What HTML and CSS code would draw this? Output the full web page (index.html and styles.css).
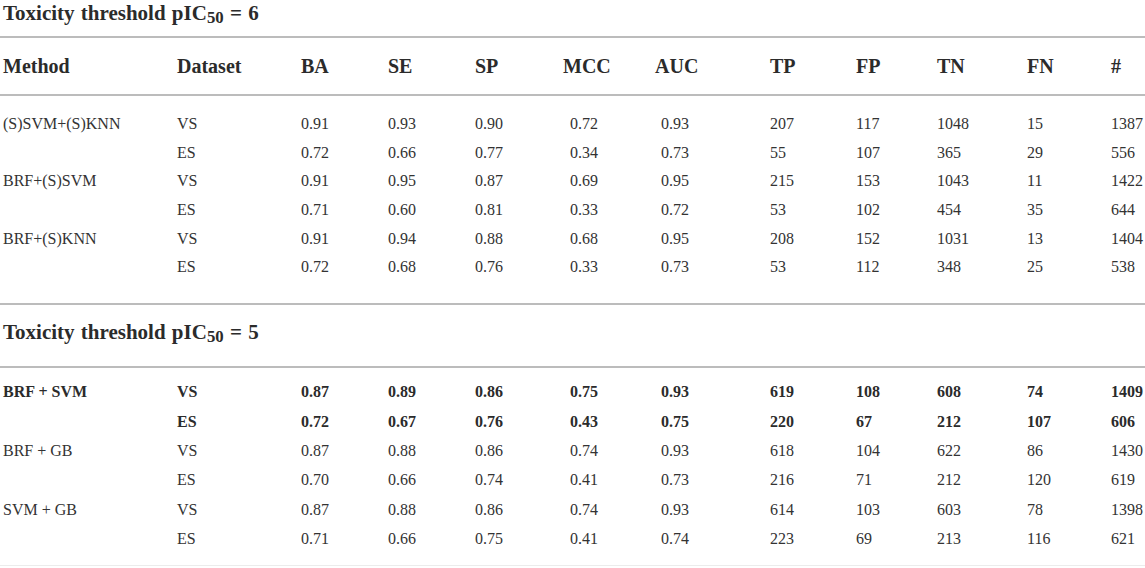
FILE: index.html
```html
<!DOCTYPE html>
<html lang="en">

<head>
    <meta charset="UTF-8">
    <meta name="viewport" content="width=device-width, initial-scale=1.0">
    <title>Toxicity threshold table</title>
    <link rel="stylesheet" href="styles.css">
</head>

<body>
    <div class="table-wrap">
        <h2 class="section-title first">Toxicity threshold pIC<sub>50</sub> = 6</h2>

        <div class="row head">
            <span>Method</span><span>Dataset</span><span>BA</span><span>SE</span><span>SP</span><span>MCC</span><span>AUC</span><span>TP</span><span>FP</span><span>TN</span><span>FN</span><span>#</span>
        </div>

        <div class="section-body">
            <div class="row">
                <span>(S)SVM+(S)KNN</span><span>VS</span><span>0.91</span><span>0.93</span><span>0.90</span><span>0.72</span><span>0.93</span><span>207</span><span>117</span><span>1048</span><span>15</span><span>1387</span>
            </div>
            <div class="row">
                <span></span><span>ES</span><span>0.72</span><span>0.66</span><span>0.77</span><span>0.34</span><span>0.73</span><span>55</span><span>107</span><span>365</span><span>29</span><span>556</span>
            </div>
            <div class="row">
                <span>BRF+(S)SVM</span><span>VS</span><span>0.91</span><span>0.95</span><span>0.87</span><span>0.69</span><span>0.95</span><span>215</span><span>153</span><span>1043</span><span>11</span><span>1422</span>
            </div>
            <div class="row">
                <span></span><span>ES</span><span>0.71</span><span>0.60</span><span>0.81</span><span>0.33</span><span>0.72</span><span>53</span><span>102</span><span>454</span><span>35</span><span>644</span>
            </div>
            <div class="row">
                <span>BRF+(S)KNN</span><span>VS</span><span>0.91</span><span>0.94</span><span>0.88</span><span>0.68</span><span>0.95</span><span>208</span><span>152</span><span>1031</span><span>13</span><span>1404</span>
            </div>
            <div class="row">
                <span></span><span>ES</span><span>0.72</span><span>0.68</span><span>0.76</span><span>0.33</span><span>0.73</span><span>53</span><span>112</span><span>348</span><span>25</span><span>538</span>
            </div>
        </div>

        <h2 class="section-title second">Toxicity threshold pIC<sub>50</sub> = 5</h2>

        <div class="section-body last">
            <div class="row bold">
                <span>BRF + SVM</span><span>VS</span><span>0.87</span><span>0.89</span><span>0.86</span><span>0.75</span><span>0.93</span><span>619</span><span>108</span><span>608</span><span>74</span><span>1409</span>
            </div>
            <div class="row bold">
                <span></span><span>ES</span><span>0.72</span><span>0.67</span><span>0.76</span><span>0.43</span><span>0.75</span><span>220</span><span>67</span><span>212</span><span>107</span><span>606</span>
            </div>
            <div class="row">
                <span>BRF + GB</span><span>VS</span><span>0.87</span><span>0.88</span><span>0.86</span><span>0.74</span><span>0.93</span><span>618</span><span>104</span><span>622</span><span>86</span><span>1430</span>
            </div>
            <div class="row">
                <span></span><span>ES</span><span>0.70</span><span>0.66</span><span>0.74</span><span>0.41</span><span>0.73</span><span>216</span><span>71</span><span>212</span><span>120</span><span>619</span>
            </div>
            <div class="row">
                <span>SVM + GB</span><span>VS</span><span>0.87</span><span>0.88</span><span>0.86</span><span>0.74</span><span>0.93</span><span>614</span><span>103</span><span>603</span><span>78</span><span>1398</span>
            </div>
            <div class="row">
                <span></span><span>ES</span><span>0.71</span><span>0.66</span><span>0.75</span><span>0.41</span><span>0.74</span><span>223</span><span>69</span><span>213</span><span>116</span><span>621</span>
            </div>
        </div>
    </div>
</body>

</html>
```

FILE: styles.css
```css
body {
    margin: 0;
    background: #ffffff;
    color: #2b2b2b;
    font-family: "Liberation Serif", "Times New Roman", serif;
}

.table-wrap {
    width: 1145px;
}

.section-title {
    margin: 0;
    padding-left: 3px;
    font-size: 21px;
    font-weight: bold;
    line-height: 26px;
    word-spacing: 1px;
    border-bottom: 2px solid #bcbcbc;
}

.section-title sub {
    font-size: 0.8em;
    line-height: 0;
    vertical-align: -0.2em;
}

.section-title.first {
    padding-bottom: 10px;
}

.section-title.second {
    padding-top: 14px;
    padding-bottom: 21px;
}

.row {
    display: grid;
    grid-template-columns: 177px 124px 87px 87px 88px 92px 115px 86px 81px 90px 84px 1fr;
    align-items: center;
    height: 28.6px;
    font-size: 16px;
    color: #333333;
}

.row span:first-child {
    padding-left: 3px;
}

/* MCC and AUC values sit a little right of their headers */
.row span:nth-child(6) {
    padding-left: 7px;
}

.row span:nth-child(7) {
    padding-left: 6px;
}

.row.head {
    height: 56px;
    font-size: 20px;
    font-weight: bold;
    color: #2b2b2b;
    border-bottom: 2px solid #bcbcbc;
}

.row.head span:nth-child(6),
.row.head span:nth-child(7) {
    padding-left: 0;
}

.section-body {
    padding-top: 14px;
    padding-bottom: 21px;
    border-bottom: 2px solid #bcbcbc;
}

.section-body.last {
    padding-top: 10px;
    padding-bottom: 11px;
    border-bottom: 1px solid #ececec;
}

.section-body.last .row {
    height: 29.4px;
}

.row.bold {
    font-weight: bold;
    color: #2b2b2b;
}
```
